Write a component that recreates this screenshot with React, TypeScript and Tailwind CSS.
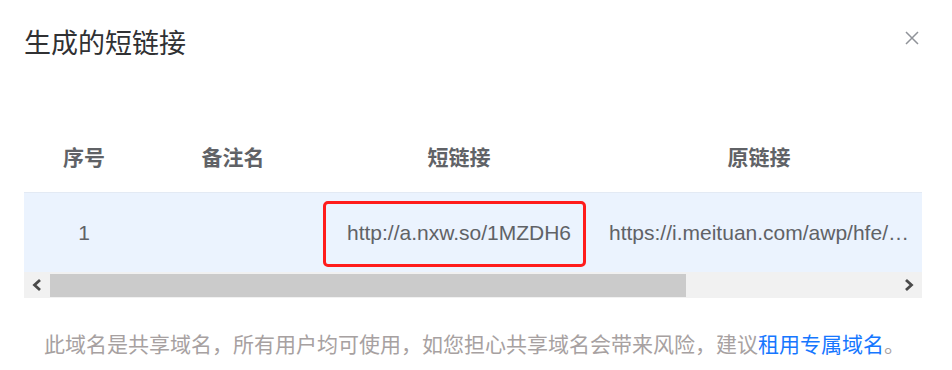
import React from 'react';

const CJK = "font-['Liberation_Sans','Noto_Sans_CJK_SC',sans-serif]";

const COLUMNS = [
  { title: '序号', width: 'w-[120px]' },
  { title: '备注名', width: 'w-[178px]' },
  { title: '短链接', width: 'w-[274px]' },
  { title: '原链接', width: 'w-[326px]' },
];

const ROW = {
  index: '1',
  remark: '',
  shortUrl: 'http://a.nxw.so/1MZDH6',
  originUrl: 'https://i.meituan.com/awp/hfe/…',
};

const Chevron = ({ dir }: { dir: 'left' | 'right' }) => (
  <svg width="14" height="14" viewBox="0 0 14 14" className="text-[#4a4a4a]">
    <path
      d={dir === 'left' ? 'M10 2 L4.5 7 L10 12' : 'M4 2 L9.5 7 L4 12'}
      fill="none"
      stroke="currentColor"
      strokeWidth="2.8"
    />
  </svg>
);

export default function App() {
  return (
    <div className={`w-[952px] h-[370px] bg-white relative ${CJK}`}>
      {/* close */}
      <button className="absolute left-[905px] top-[31px] w-[14px] h-[14px] text-[#909399]">
        <svg width="14" height="14" viewBox="0 0 14 14">
          <path d="M1 1 L13 13 M13 1 L1 13" stroke="currentColor" strokeWidth="1.5" />
        </svg>
      </button>

      <div className="px-[24px] pt-[31px]">
        <h1 className="text-[27px] leading-[27px] text-[#303133] font-normal">生成的短链接</h1>

        {/* table */}
        <div className="mt-[65px] w-[898px]">
          <div className="flex h-[70px] items-center border-b border-[#e3eaf4]">
            {COLUMNS.map(c => (
              <div
                key={c.title}
                className={`${c.width} text-center text-[21px] leading-[21px] font-bold text-[#606266]`}
              >
                {c.title}
              </div>
            ))}
          </div>

          <div className="flex h-[79px] items-center bg-[#ebf3fe] text-[21px] leading-[21px] text-[#606266]">
            <div className="w-[120px] text-center">{ROW.index}</div>
            <div className="w-[178px] text-center">{ROW.remark}</div>
            <div className="w-[274px] h-full relative flex items-center justify-center">
              <span>{ROW.shortUrl}</span>
              <div className="absolute left-[1px] top-[8px] w-[263px] h-[66px] border-[3px] border-[#ff1c1c] rounded-[5px]" />
            </div>
            <div className="w-[326px] px-[13px] whitespace-nowrap">{ROW.originUrl}</div>
          </div>

          {/* scrollbar */}
          <div className="flex h-[26px] bg-[#f1f1f1] items-center">
            <div className="w-[26px] flex justify-center">
              <Chevron dir="left" />
            </div>
            <div className="w-[636px] h-[23px] bg-[#cbcbcb]" />
            <div className="flex-1" />
            <div className="w-[26px] flex justify-center">
              <Chevron dir="right" />
            </div>
          </div>
        </div>

        <p className="mt-[36px] ml-[20px] text-[21px] leading-[21px] text-[#a7a1a1] whitespace-nowrap">
          此域名是共享域名，所有用户均可使用，如您担心共享域名会带来风险，建议
          <a className="text-[#1677ff]">租用专属域名</a>。
        </p>
      </div>
    </div>
  );
}
